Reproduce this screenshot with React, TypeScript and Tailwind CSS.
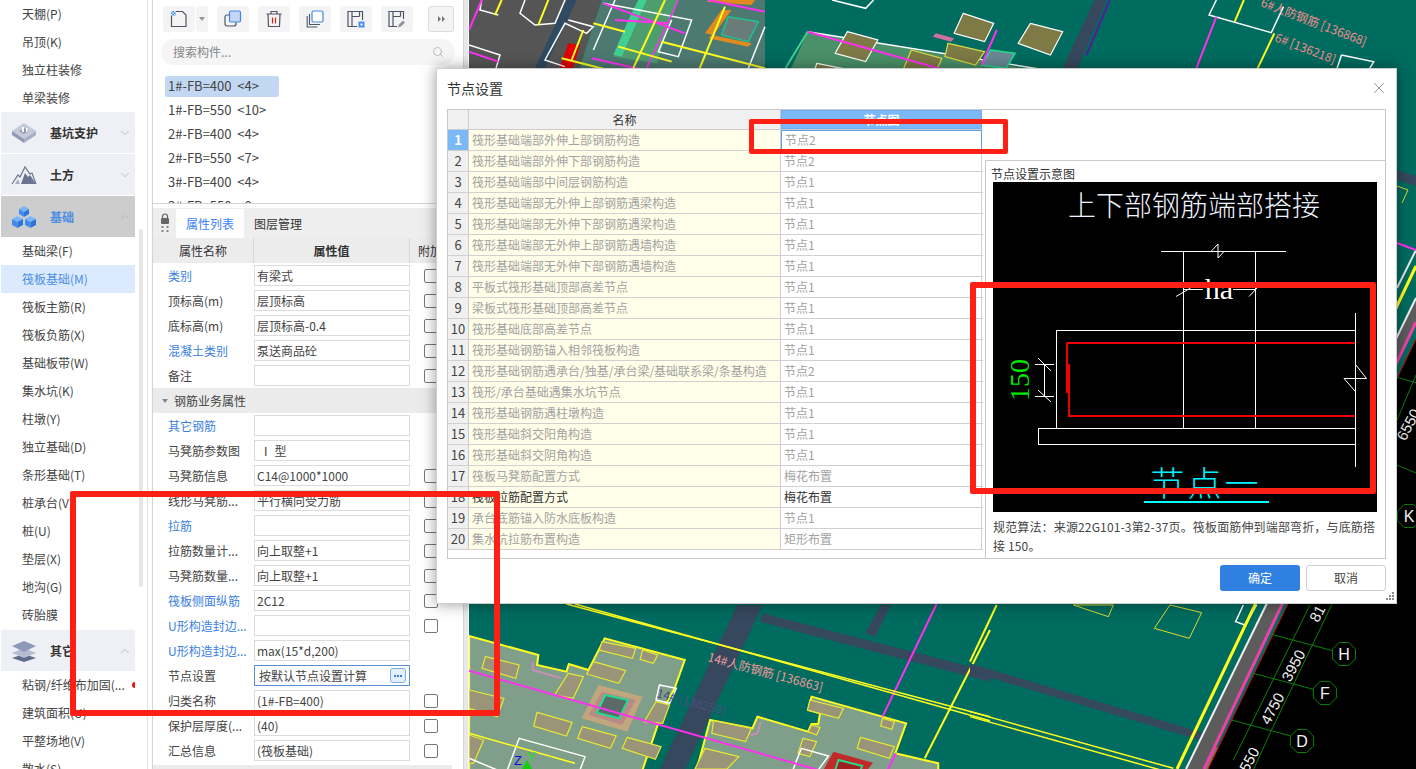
import { ChevronDown, ChevronUp, Search, X } from 'lucide-react';

type PtsProps = { p: string; c?: string; w?: number; f?: string };

// polygon / line in page pixels, stroke stays the same under the group's scale
function Ln({ p, c = 'none', w = 2, f = 'none' }: PtsProps) {
    return <polyline points={p} fill={f} stroke={c} strokeWidth={w} vectorEffect="non-scaling-stroke" />;
}

function Block({ p, f = '#9a9578', c = '#e8e832', w = 1.2 }: PtsProps) {
    return <polygon points={p} fill={f} stroke={c} strokeWidth={w} vectorEffect="non-scaling-stroke" />;
}

// axis bubble, an octagon around the grid letter
function Bubble({ cx, cy }: { cx: number; cy: number }) {
    const pts = [0, 1, 2, 3, 4, 5, 6, 7]
        .map((i) => {
            const a = (Math.PI / 4) * i + Math.PI / 8;
            return `${cx + 12.5 * Math.cos(a)},${cy + 12.5 * Math.sin(a)}`;
        })
        .join(' ');
    return <polygon points={pts} fill="#000" stroke="#0a800a" strokeWidth="1" />;
}

const lowerBlocks = [
    '75,170 175,195 165,235 65,205',
    '395,185 490,212 470,250 375,222',
    '420,125 520,145 510,175 412,150',
    '540,150 585,165 572,190 533,178',
    '320,220 365,230 335,295 280,285',
    '228,337 332,367 315,408 218,378',
    '362,380 462,408 445,445 348,415',
    '495,412 595,440 578,478 480,445',
    '27,270 130,295 110,350 27,325',
    '27,405 70,420 40,490 27,490',
    '580,305 620,315 600,370 545,365',
    '750,362 862,385 845,425 745,400',
    '725,445 825,470 790,507 695,507',
    '1035,300 1135,325 1120,355 1028,330',
    '1185,412 1285,440 1270,475 1175,445',
    '1250,355 1285,365 1278,388 1245,378',
    '1040,375 1065,382 1055,405 1030,395',
    '1015,415 1055,425 1035,470 1000,460',
];

function CadView() {
    return (
        <svg className="block h-[769px] w-[947px] shrink-0" viewBox="469 0 947 769">
            <rect x="469" y="0" width="947" height="769" fill="#006b5f" />

            {/* top left, dark slab and rebar */}
            <g transform="translate(465 0) scale(.3333)">
                <Block p="12,0 410,0 340,215 12,215" f="#555555" c="none" />
                <Block p="410,0 900,0 900,215 340,215" f="#4c7a70" c="none" />
                <Block p="305,0 335,0 235,215 205,215" f="#2f4a63" c="none" />
                <Block p="520,0 640,0 575,190 445,170" f="#4e9d6e" c="none" />
                <Block p="490,60 520,0 545,0 470,170 445,165" f="#40cf90" c="none" />
                <Block p="310,130 345,135 320,215 280,215" f="#e00000" c="none" />
                <Block p="770,30 800,30 745,105 720,100" f="#e08a20" c="none" />
                <Block p="740,105 860,130 850,140 730,115" f="#e08a20" c="none" />
                <Block p="730,0 870,0 860,15 725,5" f="#e08a20" c="none" />
                <Block p="790,50 880,65 850,125 770,105" f="#6a7c78" c="#20c090" w={1.5} />
                <Ln p="50,0 45,30 100,45" c="#fff" w={1.5} />
                <Ln p="180,0 165,40 210,75 270,70 300,0" c="#fff" w={1.5} />
                <Ln p="310,60 385,80 365,100 300,70 240,180 300,200" c="#fff" w={1.5} />
                <Ln p="12,135 105,165 90,215" c="#fff" w={1.5} />
                <Ln p="415,10 680,60 640,170 580,155 620,60" c="#fff" w={1.5} />
                <Ln p="450,0 385,150" c="#fff" w={1.5} />
                <Ln p="900,80 850,205" c="#fff" w={1.5} />
                <Ln p="50,0 12,90" c="#ff30f0" w={2} />
                <Ln p="12,155 100,185" c="#ff30f0" w={2} />
                <Ln p="415,10 660,100" c="#ff30f0" w={2} />
                <Ln p="450,60 610,70" c="#ff30f0" w={2} />
                <Ln p="380,175 560,215" c="#ff30f0" w={2} />
                <Ln p="730,0 900,35" c="#ff30f0" w={2} />
                <Ln p="640,0 540,215" c="#ff30f0" w={1.5} />
                <Ln p="110,0 90,45" c="#ffff20" w={2} />
                <Ln p="250,0 220,75" c="#ffff20" w={2} />
                <Ln p="385,70 480,95" c="#ffff20" w={2} />
                <Ln p="460,140 620,185" c="#ffff20" w={2} />
                <Ln p="600,0 500,215" c="#ffff20" w={2} />
                <Ln p="590,125 900,205" c="#ffff20" w={2} />
                <Ln p="780,20 700,215" c="#ffff20" w={2} />
                <Ln p="355,90 320,180" c="#ffff20" w={2} />
                <Ln p="290,175 450,215" c="#ffff20" w={2} />
            </g>

            {/* top centre and right */}
            <g transform="translate(460 0) scale(.61 .3333)">
                <Block p="570,95 960,215 540,215" f="#4a9068" c="none" />
                <Ln p="570,95 960,210" c="#fff" w={1.5} />
                <Ln p="570,95 530,215" c="#40cf90" w={2} />
                <Block p="635,95 685,120 665,185 615,160" f="#7d7a45" c="#fff" />
                <Block p="825,40 875,70 860,125 810,100" f="#7d7a45" c="#fff" />
                <Block p="935,70 988,95 968,165 915,130" f="#7d7a45" c="#fff" />
                <Block p="800,130 860,155 845,195 795,170" f="#7d7a45" c="#dcdc40" />
                <Block p="740,150 790,175 780,215 725,215" f="#7d7a45" c="#dcdc40" />
                <Block p="585,190 640,210 640,215 580,215" f="#7d7a45" c="#fff" />
                <Block p="780,100 810,115 805,125 775,110" f="#d070a0" c="none" />
                <Block p="870,150 910,160 895,205 855,195" f="#6a8898" c="#20e090" w={1.5} />
                <Ln p="570,95 790,208" c="#ff30f0" w={2} />
                <Ln p="880,90 855,195" c="#ff30f0" w={2} />
                <Block p="1040,0 1060,0 1010,215 985,215" f="#36485e" c="none" />
                <Ln p="1065,0 1027,165" c="#5a1a9a" w={2} />
                <Ln p="610,0 665,25 678,0" c="#fff" w={1.5} />
                <Ln p="1240,0 1228,45 1330,98 1350,20" c="#fff" w={1.5} />
                <Ln p="1240,50 1205,215" c="#ff30f0" w={2} />
                <Ln p="1285,0 1270,65" c="#ffff20" w={2} />
                <Ln p="1335,100 1305,215" c="#ffff20" w={2} />
                <Ln p="1445,165 1498,185 1488,215" c="#fff" w={1.5} />
                <Ln p="1445,165 1436,215" c="#fff" w={1.5} />
            </g>
            <text x="1260" y="6" transform="rotate(21 1260 6)" fontSize="12" fill="#f08c8c" fontFamily="'Noto Sans CJK SC', sans-serif">6#人防钢筋 [136868]</text>
            <text x="1274" y="41" transform="rotate(21 1274 41)" fontSize="12" fill="#f08c8c" fontFamily="'Noto Sans CJK SC', sans-serif">6# [136218]</text>

            {/* below the dialog, slab with pits */}
            <g transform="translate(460 600) scale(.338 .3333)">
                <Block p="895,40 1568,215 1568,245 888,65" f="#36485e" c="none" />
                <Block p="1245,15 1275,15 1228,110 1198,100" f="#36485e" c="none" />
                <Block p="27,108 232,165 228,195 315,215 322,192 380,210 428,115 665,180 635,265 600,330 540,510 27,510" f="#7f9f8b" c="#ffff20" w={2} />
                <Block p="740,360 865,385 880,350 1030,395 1040,372 1060,372 1065,340 1030,330 1040,290 1320,370 1288,460 1415,490 1415,510 700,510" f="#7f9f8b" c="#ffff20" w={2} />
                <Block p="820,15 895,15 665,510 590,510" f="#36485e" c="none" />
                {lowerBlocks.map((p) => (
                    <Block key={p} p={p} />
                ))}
                <Block p="410,255 540,290 495,395 360,355" f="#c2a67e" c="none" />
                <Block p="420,275 520,300 480,375 380,345" f="#b98b86" c="none" />
                <Block p="430,285 497,300 470,355 405,338" f="#5d6b68" c="#20dc90" w={2} />
                <Block p="1105,455 1222,488 1205,510 1075,510" f="#c22a2a" c="none" />
                <Block p="1120,480 1190,498 1185,510 1110,510" f="#a02020" c="#20dc90" w={2} />
                <Ln p="215,185 215,210 300,235" c="#c98fb0" w={2} />
                <Ln p="890,365 880,400 860,405" c="#c98fb0" w={2} />
                <Ln p="140,510 175,415 370,470 355,510" c="#fff" w={1.5} />
                <Ln p="27,475 110,510" c="#fff" w={1.5} />
                <Block p="590,255 640,265 620,310 580,300" f="none" c="#fff" w={1.5} />
                <Ln p="985,510 1010,445 1090,468 1060,510" c="#fff" w={1.5} />
                <Ln p="27,400 340,490" c="#ffff20" w={1.5} />
                <Ln p="27,212 1060,510" c="#ff30f0" w={2} />
                <Ln p="1410,12 1250,350" c="#ff30f0" w={2} />
                <Ln p="1290,460 1265,510" c="#ff30f0" w={2} />
                <Ln p="1568,90 1375,475" c="#ffff20" w={2} />
                <Ln p="315,12 1568,350" c="#ffff20" w={1.5} />
                <Ln p="340,12 1568,362" c="#ffff20" w={1.5} />
            </g>
            <text x="707" y="661" transform="rotate(15 707 661)" fontSize="12" fill="#f09a9a" fontFamily="'Noto Sans CJK SC', sans-serif">14#人防钢筋 [136863]</text>
            <text x="656" y="697" transform="rotate(15 656 697)" fontSize="12" fill="#4a4f80" fontFamily="'Noto Sans CJK SC', sans-serif">14# [138259]</text>
            <text x="514" y="765" fontSize="13" fill="#1010e0" fontFamily="'Liberation Sans', sans-serif">Z</text>
            <text x="527" y="761" fontSize="13" fill="#20e020" fontFamily="'Liberation Sans', sans-serif">Y</text>
            <polygon points="522,769 527,760 532,769" fill="#10d010" />

            {/* under the dialog on the right, drawn with zoom of the axis area */}
            <g transform="translate(970 490) scale(.3333)">
                <Block p="310,345 430,345 415,380" f="none" c="#dcdc30" w={1} />
                <Block p="600,345 695,368 658,445 553,415" f="none" c="#dcdc30" w={1} />
                <Block p="0,520 720,735 712,757 0,545" f="#36485e" c="none" />
                <Ln p="80,345 0,515" c="#ffff20" w={2} />
                <Ln p="0,665 610,835" c="#ffff20" w={1.5} />
                <Ln p="0,680 590,845" c="#ffff20" w={1.5} />
                <Ln p="860,345 825,405 797,395 820,345" c="#fff" w={1.5} />
                <Block p="730,770 810,785 790,840 700,840" f="#6e7b5e" c="none" />
            </g>
            <polygon points="1186,769 1416,298 1416,322 1204,769" fill="#5c5c5c" />
            <polygon points="1416,339 1416,769 1208,769" fill="#000" />
            <Ln p="1177,769 1416,266" c="#ffff20" w={3} />
            <Ln p="1186,769 1416,298" c="#f0f0f0" w={2} />
            <Ln p="1204,769 1416,322" c="#f040a8" w={3} />
            <Ln p="1208,769 1416,339" c="#e00000" w={1} />
            <Ln p="1397,288 1416,250" c="#e8e8e8" w={2} />
            <Ln p="1397,243 1416,250" c="#ff30f0" w={2} />
            <Block p="1397,170 1416,176 1416,186 1397,180" f="#36485e" c="none" />
            <Ln p="1397,186 1408,190 1402,203" c="#dcdc30" w={1} />

            {/* axis lines and bubbles */}
            <g transform="translate(970 490) scale(.3333)">
                <Ln p="900,432 1088,482" c="#0a800a" w={1} />
                <Ln p="850,550 1030,598" c="#0a800a" w={1} />
                <Ln p="785,690 962,738" c="#0a800a" w={1} />
                <Ln p="1020,345 840,710 790,810" c="#0a800a" w={1} />
                <Ln p="1085,345 900,730 850,840" c="#0a800a" w={1} />
            </g>
            <Bubble cx={1344} cy={654} />
            <Bubble cx={1325} cy={693} />
            <Bubble cx={1302} cy={741} />
            <Bubble cx={1409} cy={516} />
            <Ln p="1397,377 1416,383" c="#0a800a" w={1} />
            <Ln p="1397,465 1416,473" c="#0a800a" w={1} />
            <Ln p="1416,375 1397,420" c="#0a800a" w={1} />
            <g fontFamily="'Liberation Sans', sans-serif" fill="#f4f4f4" textAnchor="middle">
                <text x="1344" y="660" fontSize="16">H</text>
                <text x="1325" y="699" fontSize="16">F</text>
                <text x="1302" y="747" fontSize="16">D</text>
                <text x="1409" y="522" fontSize="16">K</text>
                <text transform="translate(1298 668) rotate(-62)" fontSize="15">3950</text>
                <text transform="translate(1277 711) rotate(-62)" fontSize="15">4750</text>
                <text transform="translate(1322 616) rotate(-62)" fontSize="15">81</text>
                <text transform="translate(1254 762) rotate(-62)" fontSize="15">550</text>
                <text transform="translate(1413 427) rotate(-62)" fontSize="15">6550</text>
            </g>
        </svg>
    );
}

function NavItem({ label, active, dot }: { label: string; active?: boolean; dot?: boolean }) {
    return (
        <div className={`relative flex h-[28px] items-center pl-[21px] ${active ? 'bg-[#dbeafe] text-[#4a8fe0]' : 'text-[#444]'}`}>
            {label}
            {dot && <span className="absolute right-0 top-[11px] h-[6px] w-[3px] rounded-l-full bg-[#f01010]" />}
        </div>
    );
}

function NavGroup({ label, icon, open, active }: { label: string; icon: React.ReactNode; open?: boolean; active?: boolean }) {
    return (
        <div className={`flex h-[41px] items-center ${active ? 'bg-[#cdcdcd]' : 'bg-[#eef0f5]'}`}>
            <div className="flex w-[49px] justify-center pr-[3px]">{icon}</div>
            <span className={`flex-1 font-bold ${active ? 'text-[#4a8fe0]' : 'text-[#333]'}`}>{label}</span>
            {open ? (
                <ChevronUp className="mr-[3px] h-[14px] w-[14px] text-[#aeb2bd]" strokeWidth={1.3} />
            ) : (
                <ChevronDown className="mr-[3px] h-[14px] w-[14px] text-[#aeb2bd]" strokeWidth={1.3} />
            )}
        </div>
    );
}

const PitIcon = (
    <svg width="26" height="22" viewBox="0 0 26 22">
        <polygon points="13,1 25,9 13,17 1,9" fill="#c5cad9" />
        <polygon points="1,9 13,17 13,21 1,13" fill="#8f97b3" />
        <polygon points="25,9 13,17 13,21 25,13" fill="#a7aec6" />
        <polygon points="13,6 18,9 13,12 8,9" fill="#8f97b3" />
        <rect x="11" y="5" width="2" height="5" fill="#fff" />
        <rect x="15" y="6" width="1.5" height="4" fill="#fff" />
    </svg>
);

const EarthIcon = (
    <svg width="26" height="20" viewBox="0 0 26 20">
        <polyline points="1,19 7,10 9,12 14,2 19,9 21,8 25,19" fill="none" stroke="#6b7590" strokeWidth="1.2" />
        <polygon points="10,19 14,8 17,12 19,10 25,19" fill="#6b7590" />
        <polygon points="4,19 7,14 9,19" fill="#a8afc4" />
    </svg>
);

const FoundationIcon = (
    <svg width="26" height="24" viewBox="0 0 26 24">
        <polygon points="13,1 18,4 13,7 8,4" fill="#7ab4fa" />
        <polygon points="8,4 13,7 13,12 8,9" fill="#3f8cf0" />
        <polygon points="18,4 13,7 13,12 18,9" fill="#2f74dc" />
        <polygon points="6.5,11 12,14 6.5,17 1,14" fill="#7ab4fa" />
        <polygon points="1,14 6.5,17 6.5,23 1,20" fill="#3f8cf0" />
        <polygon points="12,14 6.5,17 6.5,23 12,20" fill="#2f74dc" />
        <polygon points="19.5,11 25,14 19.5,17 14,14" fill="#7ab4fa" />
        <polygon points="14,14 19.5,17 19.5,23 14,20" fill="#3f8cf0" />
        <polygon points="25,14 19.5,17 19.5,23 25,20" fill="#2f74dc" />
    </svg>
);

const OtherIcon = (
    <svg width="26" height="24" viewBox="0 0 26 24">
        <polygon points="13,15 25,19 13,23 1,19" fill="#5f6b8c" />
        <polygon points="13,9 25,14 13,19 1,14" fill="#b6bdd2" />
        <polygon points="13,2 25,7 13,13 1,7" fill="#8f9abb" />
    </svg>
);

const topItems = ['天棚(P)', '吊顶(K)', '独立柱装修', '单梁装修'];
const baseItems = ['基础梁(F)', '筏板基础(M)', '筏板主筋(R)', '筏板负筋(X)', '基础板带(W)', '集水坑(K)', '柱墩(Y)', '独立基础(D)', '条形基础(T)', '桩承台(V)', '桩(U)', '垫层(X)', '地沟(G)', '砖胎膜'];
const otherItems = ['粘钢/纤维布加固(...', '建筑面积(U)', '平整场地(V)', '散水(S)'];

function Sidebar() {
    return (
        <aside className="flex h-[769px] w-[148px] shrink-0 overflow-hidden border-r border-[#e2e2e2] pl-px">
            <div className="w-[134px] shrink-0">
                {topItems.map((t) => (
                    <NavItem key={t} label={t} />
                ))}
                <div className="flex flex-col gap-px">
                    <NavGroup label="基坑支护" icon={PitIcon} />
                    <NavGroup label="土方" icon={EarthIcon} />
                    <NavGroup label="基础" icon={FoundationIcon} open active />
                </div>
                {baseItems.map((t) => (
                    <NavItem key={t} label={t} active={t === '筏板基础(M)'} />
                ))}
                <div className="mt-px">
                    <NavGroup label="其它" icon={OtherIcon} open />
                </div>
                {otherItems.map((t, i) => (
                    <NavItem key={t} label={t} dot={i === 0} />
                ))}
            </div>
            <div className="ml-[4px] mt-[229px] h-[358px] w-[4px] rounded-full bg-[#e6e6e6]" />
        </aside>
    );
}

function ToolButton({ children, className = 'ml-[9px] w-[32px]' }: { children: React.ReactNode; className?: string }) {
    return <div className={`flex h-[26px] items-center justify-center rounded-[3px] bg-[#f4f4f4] ${className}`}>{children}</div>;
}

function Toolbar() {
    const s = '#4e5566';
    return (
        <div className="flex h-[26px] items-center pl-[10px]">
            <ToolButton className="w-[32px]">
                <svg width="18" height="18" viewBox="0 0 18 18">
                    <path d="M1.5 5v11.5h14.5V5l-3.5-3.5H6" fill="none" stroke={s} strokeWidth="1.2" />
                    <rect x="1" y="1" width="4.5" height="4.5" fill="#4a8fe8" />
                    <path d="M1 1h1.5v1.5H1zM4 1h1.5v1.5H4zM2.5 2.5H4V4H2.5zM1 4h1.5v1.5H1zM4 4h1.5v1.5H4z" fill="#cfe0f8" />
                </svg>
            </ToolButton>
            <ToolButton className="ml-px w-[12px]">
                <span className="h-0 w-0 border-x-[3px] border-t-[4px] border-x-transparent border-t-[#999]" />
            </ToolButton>
            <ToolButton>
                <svg width="18" height="18" viewBox="0 0 18 18">
                    <rect x="1" y="5" width="11" height="11" rx="2" fill="none" stroke={s} strokeWidth="1.2" />
                    <rect x="5.5" y="1" width="11" height="11" rx="1.5" fill="#c3d7f4" stroke="#3f86e8" strokeWidth="1.2" />
                </svg>
            </ToolButton>
            <ToolButton>
                <svg width="18" height="18" viewBox="0 0 18 18">
                    <path d="M1.5 4h15M6 4V1.5h6V4M3 4l.5 12.5h11L15 4" fill="none" stroke={s} strokeWidth="1.2" />
                    <path d="M7.5 7.5v6M10.5 7.5v6" stroke="#e02020" strokeWidth="1.2" />
                </svg>
            </ToolButton>
            <ToolButton>
                <svg width="18" height="18" viewBox="0 0 18 18">
                    <path d="M1.2 6v11h10" fill="none" stroke={s} strokeWidth="1.1" />
                    <path d="M3.5 4v10.5H14" fill="none" stroke={s} strokeWidth="1.1" />
                    <rect x="6" y="1" width="11" height="11" rx="1.5" fill="#fff" stroke="#3f86e8" strokeWidth="1.2" />
                </svg>
            </ToolButton>
            <ToolButton>
                <svg width="18" height="18" viewBox="0 0 18 18">
                    <path d="M10 16.5H1V1.5h14.5V10" fill="none" stroke={s} strokeWidth="1.2" />
                    <path d="M5 1.5v15M12.5 1.5v5M5 6.5h7.5" fill="none" stroke={s} strokeWidth="1.2" />
                    <rect x="11.5" y="11.5" width="6" height="6" fill="#4a8fe8" />
                    <rect x="13.5" y="13.5" width="2" height="2" fill="#fff" />
                </svg>
            </ToolButton>
            <ToolButton>
                <svg width="18" height="18" viewBox="0 0 18 18">
                    <path d="M9 16.5H1V1.5h14.5V9" fill="none" stroke={s} strokeWidth="1.2" />
                    <path d="M5 1.5v15M12.5 1.5v5M5 6.5h7.5" fill="none" stroke={s} strokeWidth="1.2" />
                    <path d="M10 17.5l1-3 4-4 2 2-4 4z" fill="#8c93a3" />
                </svg>
            </ToolButton>
            <div className="ml-[15px] flex h-[26px] w-[26px] items-center justify-center gap-px rounded-[3px] border border-[#dcdcdc] bg-[#f4f4f4]">
                <span className="h-0 w-0 border-y-[3px] border-l-[3px] border-y-transparent border-l-[#777]" />
                <span className="h-0 w-0 border-y-[3px] border-l-[3px] border-y-transparent border-l-[#777]" />
            </div>
        </div>
    );
}

const partItems = ['1#-FB=400  <4>', '1#-FB=550  <10>', '2#-FB=400  <4>', '2#-FB=550  <7>', '3#-FB=400  <4>', '3#-FB=550  <8>'];

function PartList() {
    return (
        <div className="h-[204px] overflow-hidden border-b border-[#d4d4d4] pt-[6px]">
            <Toolbar />
            <div className="mx-[8px] mt-[7px] flex h-[26px] w-[294px] items-center justify-between rounded-full bg-[#f5f5f5] pl-[12px] pr-[11px] text-[#888]">
                搜索构件...
                <Search className="h-[12px] w-[12px] text-[#aaa]" strokeWidth={1.5} />
            </div>
            <div className="mt-[9px] pl-[12px] text-[#444]">
                {partItems.map((t, i) => (
                    <div key={t} className="flex h-[24px] items-center">
                        <span className={`flex h-[21px] items-center whitespace-pre rounded-[2px] pl-[3px] text-[13px] ${i === 0 ? 'w-[114px] bg-[#c2d8f2]' : ''}`}>{t}</span>
                    </div>
                ))}
            </div>
        </div>
    );
}

type AttrRow = { name: string; value?: string; blue?: boolean; check?: boolean; focus?: boolean };

const attrsTop: AttrRow[] = [
    { name: '类别', value: '有梁式', blue: true, check: true },
    { name: '顶标高(m)', value: '层顶标高', check: true },
    { name: '底标高(m)', value: '层顶标高-0.4', check: true },
    { name: '混凝土类别', value: '泵送商品砼', blue: true, check: true },
    { name: '备注', check: true },
];

const attrsRebar: AttrRow[] = [
    { name: '其它钢筋', blue: true },
    { name: '马凳筋参数图', value: ' Ⅰ 型' },
    { name: '马凳筋信息', value: 'C14@1000*1000', check: true },
    { name: '线形马凳筋...', value: '平行横向受力筋', check: true },
    { name: '拉筋', blue: true, check: true },
    { name: '拉筋数量计...', value: '向上取整+1', check: true },
    { name: '马凳筋数量...', value: '向上取整+1', check: true },
    { name: '筏板侧面纵筋', value: '2C12', blue: true, check: true },
    { name: 'U形构造封边...', blue: true, check: true },
    { name: 'U形构造封边...', value: 'max(15*d,200)', blue: true },
    { name: '节点设置', value: '按默认节点设置计算', focus: true },
    { name: '归类名称', value: '(1#-FB=400)', check: true },
    { name: '保护层厚度(...', value: '(40)', check: true },
    { name: '汇总信息', value: '(筏板基础)', check: true },
];

function AttrLine({ row }: { row: AttrRow }) {
    return (
        <div className="flex h-[25px] items-center">
            <span className={`w-[101px] shrink-0 whitespace-nowrap pl-[15px] ${row.blue ? 'text-[#3b7fe0]' : 'text-[#444]'}`}>{row.name}</span>
            {row.focus ? (
                <div className="flex h-[21px] w-[156px] items-center justify-between border border-[#5b8fd0] pl-[4px] pr-[3px] text-[#444]">
                    {row.value}
                    <span className="flex h-[15px] w-[16px] items-center justify-center gap-px rounded-[3px] border border-[#7aaee8] bg-[#e4effc]">
                        <i className="h-[2px] w-[2px] bg-[#3b7fe0]" />
                        <i className="h-[2px] w-[2px] bg-[#3b7fe0]" />
                        <i className="h-[2px] w-[2px] bg-[#3b7fe0]" />
                    </span>
                </div>
            ) : (
                <div className="flex h-[21px] w-[156px] items-center whitespace-pre border border-[#dcdcdc] pl-[2px] text-[#444]">{row.value}</div>
            )}
            {row.check && <span className="ml-[14px] h-[14px] w-[14px] rounded-[2px] border border-[#777]" />}
        </div>
    );
}

function AttrPanel() {
    return (
        <div className="mt-[4px] w-[299px]">
            <div className="flex h-[30px] items-end bg-[#eeeeef]">
                <div className="flex h-[30px] w-[23px] flex-col items-center justify-center">
                    <svg width="10" height="20" viewBox="0 0 10 20">
                        <path d="M2.5 5V3.5a2.5 2.5 0 0 1 5 0V5" fill="none" stroke="#666" strokeWidth="1.2" />
                        <rect x="1" y="5" width="8" height="6" rx="1" fill="#666" />
                        <path d="M1.5 13h2v2h-2zM6.5 13h2v2h-2zM1.5 17h2v2h-2zM6.5 17h2v2h-2z" fill="#888" />
                    </svg>
                </div>
                <div className="flex h-[29px] w-[68px] items-center justify-center bg-white text-[#3b82f6]">属性列表</div>
                <div className="flex h-[29px] w-[68px] items-center justify-center text-[#333]">图层管理</div>
            </div>
            <div className="flex h-[25px] items-center bg-[#ececec] text-[#333]">
                <span className="w-[100px] text-center">属性名称</span>
                <span className="w-[157px] border-x border-[#d8d8d8] text-center font-bold leading-[25px]">属性值</span>
                <span className="pl-[8px]">附加</span>
            </div>
            {attrsTop.map((r) => (
                <AttrLine key={r.name} row={r} />
            ))}
            <div className="flex h-[25px] items-center bg-[#ebebeb] pl-[9px] text-[#444]">
                <span className="mr-[6px] h-0 w-0 border-x-[3px] border-t-[4px] border-x-transparent border-t-[#888]" />
                钢筋业务属性
            </div>
            {attrsRebar.map((r, i) => (
                <AttrLine key={i} row={r} />
            ))}
            <div className="mt-[2px] h-[8px] bg-[#ebebeb]" />
        </div>
    );
}

const nodeRows = [
    ['筏形基础端部外伸上部钢筋构造', '节点2'],
    ['筏形基础端部外伸下部钢筋构造', '节点2'],
    ['筏形基础端部中间层钢筋构造', '节点1'],
    ['筏形基础端部无外伸上部钢筋遇梁构造', '节点1'],
    ['筏形基础端部无外伸下部钢筋遇梁构造', '节点1'],
    ['筏形基础端部无外伸上部钢筋遇墙构造', '节点1'],
    ['筏形基础端部无外伸下部钢筋遇墙构造', '节点1'],
    ['平板式筏形基础顶部高差节点', '节点1'],
    ['梁板式筏形基础顶部高差节点', '节点1'],
    ['筏形基础底部高差节点', '节点1'],
    ['筏形基础钢筋锚入相邻筏板构造', '节点1'],
    ['筏形基础钢筋遇承台/独基/承台梁/基础联系梁/条基构造', '节点2'],
    ['筏形/承台基础遇集水坑节点', '节点1'],
    ['筏形基础钢筋遇柱墩构造', '节点1'],
    ['筏形基础斜交阳角构造', '节点1'],
    ['筏形基础斜交阴角构造', '节点1'],
    ['筏板马凳筋配置方式', '梅花布置'],
    ['筏板拉筋配置方式', '梅花布置'],
    ['承台底筋锚入防水底板构造', '节点1'],
    ['集水坑拉筋布置构造', '矩形布置'],
];

function NodeTable() {
    return (
        <div className="w-[535px] shrink-0">
            <div className="flex h-[20px] border-b border-[#ccc]">
                <div className="w-[21px] border-r border-[#ccc] bg-[#f0f0f0]" />
                <div className="flex w-[312px] items-center justify-center border-r border-[#ccc] bg-[#f0f0f0] text-[#333]">名称</div>
                <div className="flex w-[201px] items-center justify-center border border-[#6fb0f5] bg-[#7ab8f7] font-bold text-white">节点图</div>
            </div>
            {nodeRows.map(([name, value], i) => (
                <div key={i} className={`flex h-[21px] border-b border-[#d0d0d0] ${i === 17 ? 'text-[#333]' : 'text-[#a2a2a2]'}`}>
                    <div className={`flex w-[21px] items-center justify-center border-r border-[#ccc] text-[13px] ${i === 0 ? 'bg-[#7ab8f7] font-bold text-white' : 'bg-[#f0f0f0] text-[#444]'}`}>{i + 1}</div>
                    <div className="flex w-[312px] items-center whitespace-nowrap border-r border-[#d0d0d0] bg-[#fffee8] pl-[3px]">{name}</div>
                    <div className={`flex w-[201px] items-center pl-[3px] ${i === 0 ? 'border border-[#5b9de8]' : 'border-r border-[#d0d0d0]'}`}>{value}</div>
                </div>
            ))}
        </div>
    );
}

function NodeDrawing() {
    return (
        <svg className="block h-[330px] w-[384px]" viewBox="0 0 384 330" shapeRendering="crispEdges">
            <rect width="384" height="330" fill="#000" />
            <text x="201" y="34" textAnchor="middle" fontSize="28" fill="#eef4ff" fontFamily="'Noto Sans CJK SC', serif" fontWeight="300">上下部钢筋端部搭接</text>
            <g fill="none" stroke="#fff" strokeWidth="1">
                <path d="M168 69.5H293M190.5 69.5V246.5M262.5 69.5V246.5" />
                <path d="M218 69.5L225 62V76L231 69.5" shapeRendering="auto" />
                <path d="M190.5 107H210M240 107H262.5" />
                <path d="M183 114.5L197.5 106M256 114.5L264 106" shapeRendering="auto" />
                <path d="M63.5 246.5V148.5H362.5M45.5 246.5H362.5V262.5H45.5ZM362.5 131V285" />
                <path d="M363 183L373.5 196.5H351L362 209" shapeRendering="auto" />
                <path d="M42 182.5H61M42 214H61M51 182.5V214" />
                <path d="M45 176L58 189M45 208L58 220" shapeRendering="auto" />
            </g>
            <text x="226" y="117" textAnchor="middle" fontSize="30" fill="#fff" fontFamily="'Liberation Serif', serif">ha</text>
            <text transform="translate(36 198) rotate(-90)" textAnchor="middle" fontSize="28" fill="#00e800" fontFamily="'Liberation Serif', serif">150</text>
            <path d="M362 160.5H74V211M76 182V234H362" fill="none" stroke="#f00000" strokeWidth="2" />
            <path d="M74 182V211" fill="none" stroke="#f00000" strokeWidth="3" />
            <text x="213" y="314" textAnchor="middle" fontSize="34" letterSpacing="3" fill="#00f0ff" fontFamily="'Noto Sans CJK SC', serif" fontWeight="300">节点一</text>
            <path d="M151 320H276" stroke="#00ffff" strokeWidth="1.5" />
        </svg>
    );
}

function NodeDialog() {
    return (
        <div className="absolute left-[436px] top-[68px] flex h-[536px] w-[961px] flex-col border border-[#cfcfcf] bg-white px-[10px] shadow-[0_0_14px_rgba(0,0,0,0.4)]">
            <div className="flex h-[40px] shrink-0 items-center justify-between pb-[2px]">
                <span className="text-[14px] text-[#333]">节点设置</span>
                <X className="mr-[-2px] h-[18px] w-[18px] text-[#888]" strokeWidth={1.2} />
            </div>
            <div className="flex h-[450px] w-[939px] shrink-0 border border-[#c8c8c8]">
                <NodeTable />
                <div className="ml-[2px] mt-[50px] flex-1 border-l border-t border-[#c8c8c8] pl-[7px] pt-[5px]">
                    <div className="ml-[-2px] h-[16px] leading-[16px] text-[#333]">节点设置示意图</div>
                    <NodeDrawing />
                    <p className="mt-[5px] w-[390px] leading-[19px] tracking-[0.15px] text-[#444]">
                        规范算法：来源22G101-3第2-37页。筏板面筋伸到端部弯折，与底筋搭
                        <br />
                        接 150。
                    </p>
                </div>
            </div>
            <div className="mt-[6px] flex justify-end gap-[6px]">
                <button className="h-[26px] w-[80px] rounded-[3px] bg-[#2f80e0] text-white">确定</button>
                <button className="h-[26px] w-[80px] rounded-[3px] border border-[#d0d0d0] bg-white text-[#444]">取消</button>
            </div>
            <svg className="absolute bottom-[3px] right-[2px]" width="8" height="8" viewBox="0 0 8 8">
                <path d="M6 0h2v2H6zM3 3h2v2H3zM6 3h2v2H6zM0 6h2v2H0zM3 6h2v2H3zM6 6h2v2H6z" fill="#888" />
            </svg>
        </div>
    );
}

export default function App() {
    return (
        <div className="relative flex h-[769px] w-[1416px] overflow-hidden bg-white font-['Noto_Sans_CJK_SC',sans-serif] text-[12px]">
            <Sidebar />
            <div className="flex w-[321px] shrink-0 bg-white pl-[4px]">
                <div className="w-[312px] shrink-0 border-l border-r border-[#d4d4d4]">
                    <PartList />
                    <AttrPanel />
                </div>
                <div className="w-[4px] bg-[#e8e8e8]" />
            </div>
            <CadView />

            <NodeDialog />

            {/* red review marks on top of the screenshot */}
            <div className="absolute left-[749px] top-[119px] h-[35px] w-[259px] rounded-[2px] border-[5px] border-[#ff2015]" />
            <div className="absolute left-[970px] top-[282px] h-[212px] w-[406px] rounded-[2px] border-[6px] border-[#ff2015]" />
            <div className="absolute left-[70px] top-[491px] h-[225px] w-[430px] rounded-[2px] border-[6px] border-[#ff2015]" />
        </div>
    );
}
